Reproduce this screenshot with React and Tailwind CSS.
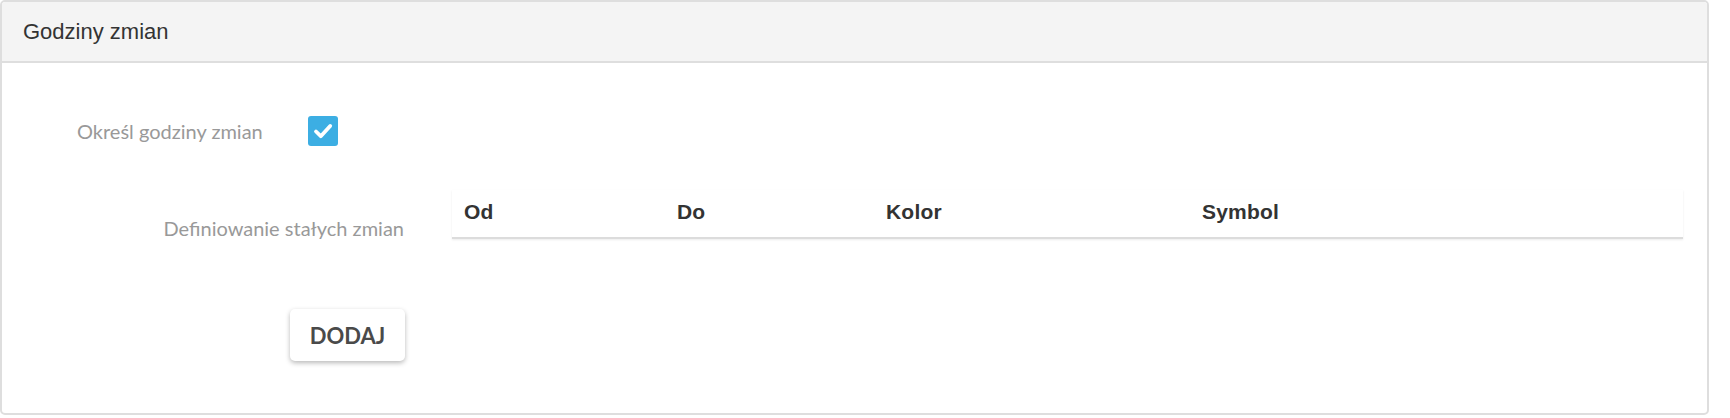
import React from "react";

export default function App() {
  return (
    <div className="w-[1730px] h-[418px] bg-white overflow-hidden">
      <div className="w-[1709px] h-[415px] border-2 border-[#dedede] rounded-[5px] overflow-hidden bg-white">
        <div className="h-[61px] bg-[#f4f4f4] border-b-2 border-[#dedede] flex items-center pl-[21px]">
          <span className="text-[22px] text-[#333] font-['Liberation_Sans',Arial,sans-serif] leading-none">
            Godziny zmian
          </span>
        </div>

        <div className="flex flex-col">
          {/* Row 1 */}
          <div className="flex items-center mt-[53px] h-[30px]">
            <div className="w-[306px] pl-[75px] text-[20px] text-[#999] font-['Lato',sans-serif] leading-none">
              Określ godziny zmian
            </div>
            <div className="w-[30px] h-[30px] rounded-[3px] bg-[#3caee3] flex items-center justify-center">
              <svg width="30" height="30" viewBox="0 0 30 30">
                <path d="M8 15.5 L12.8 20.2 L22.2 10" fill="none" stroke="white" strokeWidth="3.8" strokeLinecap="round" strokeLinejoin="round" />
              </svg>
            </div>
          </div>

          {/* Row 2 */}
          <div className="flex items-start mt-[44px]">
            <div className="w-[402px] text-right pt-[26px] text-[20px] leading-[24px] text-[#999] font-['Lato',sans-serif]">
              Definiowanie stałych zmian
            </div>
            <div className="ml-[48px] w-[1231px]">
              <div className="grid grid-cols-[213px_209px_316px_1fr] h-[49px] pb-[3px] items-center border-b-2 border-[#dcdcdc] shadow-[0_1px_2px_rgba(0,0,0,0.08)] text-[21px] tracking-[0.2px] font-bold text-[#333] font-['Liberation_Sans',Arial,sans-serif]">
                <div className="pl-[12px]">Od</div>
                <div className="pl-[12px]">Do</div>
                <div className="pl-[12px]">Kolor</div>
                <div className="pl-[12px]">Symbol</div>
              </div>
            </div>
          </div>

          {/* Row 3 */}
          <div className="flex mt-[69px] pl-[288px]">
            <button className="w-[115px] h-[52px] rounded-[5px] bg-white shadow-[0_2px_5px_rgba(0,0,0,0.28)] text-[22px] font-bold text-[#4a4a4a] font-['Lato',sans-serif] flex items-center justify-center">
              DODAJ
            </button>
          </div>
        </div>
      </div>
    </div>
  );
}
